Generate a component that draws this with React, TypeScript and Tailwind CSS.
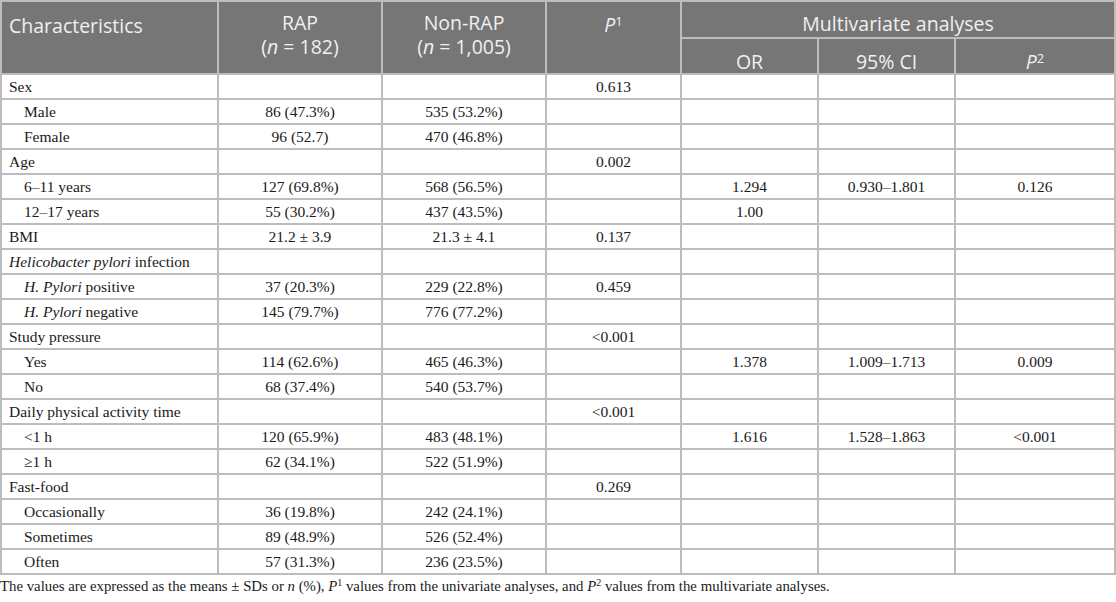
const rows: { label: React.ReactNode; sub?: boolean; rap?: string; non?: string; p1?: string; or?: string; ci?: string; p2?: string }[] = [
  { label: "Sex", p1: "0.613" },
  { label: "Male", sub: true, rap: "86 (47.3%)", non: "535 (53.2%)" },
  { label: "Female", sub: true, rap: "96 (52.7)", non: "470 (46.8%)" },
  { label: "Age", p1: "0.002" },
  { label: "6–11 years", sub: true, rap: "127 (69.8%)", non: "568 (56.5%)", or: "1.294", ci: "0.930–1.801", p2: "0.126" },
  { label: "12–17 years", sub: true, rap: "55 (30.2%)", non: "437 (43.5%)", or: "1.00" },
  { label: "BMI", rap: "21.2 ± 3.9", non: "21.3 ± 4.1", p1: "0.137" },
  { label: <><i>Helicobacter pylori</i> infection</> },
  { label: <><i>H. Pylori</i> positive</>, sub: true, rap: "37 (20.3%)", non: "229 (22.8%)", p1: "0.459" },
  { label: <><i>H. Pylori</i> negative</>, sub: true, rap: "145 (79.7%)", non: "776 (77.2%)" },
  { label: "Study pressure", p1: "<0.001" },
  { label: "Yes", sub: true, rap: "114 (62.6%)", non: "465 (46.3%)", or: "1.378", ci: "1.009–1.713", p2: "0.009" },
  { label: "No", sub: true, rap: "68 (37.4%)", non: "540 (53.7%)" },
  { label: "Daily physical activity time", p1: "<0.001" },
  { label: "<1 h", sub: true, rap: "120 (65.9%)", non: "483 (48.1%)", or: "1.616", ci: "1.528–1.863", p2: "<0.001" },
  { label: "≥1 h", sub: true, rap: "62 (34.1%)", non: "522 (51.9%)" },
  { label: "Fast-food", p1: "0.269" },
  { label: "Occasionally", sub: true, rap: "36 (19.8%)", non: "242 (24.1%)" },
  { label: "Sometimes", sub: true, rap: "89 (48.9%)", non: "526 (52.4%)" },
  { label: "Often", sub: true, rap: "57 (31.3%)", non: "236 (23.5%)" },
];

const th = "border-2 border-[#bdbdbd] bg-[#767676] text-[#f0f0f0] font-normal";
const td = "border-2 border-[#bdbdbd] text-center px-2";

export default function App() {
  return (
    <div className="w-[1116px] h-[602px] bg-white overflow-hidden">
      <table className="w-[1116px] table-fixed border-collapse text-[15.5px] text-[#1a1a1a] font-['Liberation_Serif',serif]">
        <colgroup>
          <col className="w-[217px]" />
          <col className="w-[164px]" />
          <col className="w-[164px]" />
          <col className="w-[135px]" />
          <col className="w-[137px]" />
          <col className="w-[137px]" />
          <col />
        </colgroup>
        <thead className="font-['Open_Sans',sans-serif] text-[19.5px] leading-[23px]">
          <tr className="h-[37px]">
            <th rowSpan={2} className={`${th} text-left align-top pl-[7px] pt-[12px]`}>Characteristics</th>
            <th rowSpan={2} className={`${th} align-top pt-[9px] leading-[24px]`}>
              RAP<br />(<i>n</i> = 182)
            </th>
            <th rowSpan={2} className={`${th} align-top pt-[9px] leading-[24px]`}>
              Non-RAP<br />(<i>n</i> = 1,005)
            </th>
            <th rowSpan={2} className={`${th} align-top pt-[11px]`}>
              <i>P</i><sup className="text-[13px]">1</sup>
            </th>
            <th colSpan={3} className={`${th} align-bottom pb-[2px]`}>Multivariate analyses</th>
          </tr>
          <tr className="h-[36px]">
            <th className={`${th} align-bottom pb-0`}>OR</th>
            <th className={`${th} align-bottom pb-0`}>95% CI</th>
            <th className={`${th} align-bottom pb-0`}>
              <i>P</i><sup className="text-[13px]">2</sup>
            </th>
          </tr>
        </thead>
        <tbody className="leading-[20px]">
          {rows.map((r, i) => (
            <tr key={i} className="h-[25px]">
              <td className={`border-2 border-[#bdbdbd] text-left ${r.sub ? "pl-[22px]" : "pl-[7px]"}`}>{r.label}</td>
              <td className={td}>{r.rap}</td>
              <td className={td}>{r.non}</td>
              <td className={td}>{r.p1}</td>
              <td className={td}>{r.or}</td>
              <td className={td}>{r.ci}</td>
              <td className={td}>{r.p2}</td>
            </tr>
          ))}
        </tbody>
      </table>
      <p className="mt-[1px] text-[14.8px] leading-[20px] text-[#1a1a1a] font-['Liberation_Serif',serif]">
        The values are expressed as the means ± SDs or <i>n</i> (%), <i>P</i>
        <sup className="text-[10px]">1</sup> values from the univariate analyses, and <i>P</i>
        <sup className="text-[10px]">2</sup> values from the multivariate analyses.
      </p>
    </div>
  );
}
